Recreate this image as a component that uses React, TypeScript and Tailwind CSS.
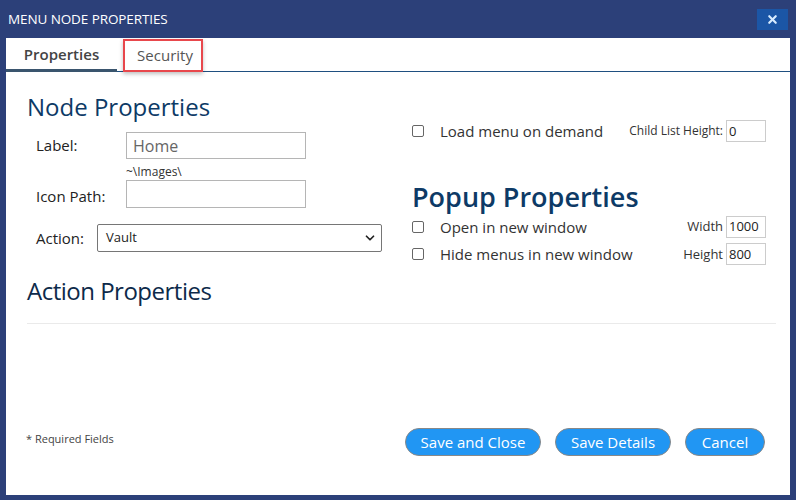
import { ChevronDown, X } from "lucide-react";

const font = { fontFamily: '"Segoe UI", "Open Sans", "Noto Sans", sans-serif' };

function Check() {
  return <span className="block w-[12px] h-[12px] border border-[#666] rounded-[2px] bg-white shrink-0" />;
}

function SmallInput({ value }: { value: string }) {
  return (
    <div className="w-[40px] h-[22px] border border-[#ccc] bg-white px-[2px] flex items-center text-[13px] text-[#222]">
      {value}
    </div>
  );
}

export default function App() {
  return (
    <div className="w-[796px] h-[500px] bg-[#2c4079] flex flex-col" style={font}>
      <div className="h-[38px] flex items-center justify-between pl-[8px] pr-[8px] shrink-0">
        <span className="text-white text-[13.5px] tracking-[-0.1px]">MENU NODE PROPERTIES</span>
        <div className="w-[31px] h-[21px] bg-[#1b56a6] flex items-center justify-center">
          <X size={13} strokeWidth={4} color="#d8ecff" />
        </div>
      </div>

      <div className="mx-[6px] h-[457px] bg-white flex flex-col">
        <div className="h-[34px] flex items-end border-b border-[#1f4f80] shrink-0">
          <div className="w-[111px] h-[34px] flex items-center justify-center border-b-[3px] border-[#3a556e] -mb-px pt-[2px]">
            <span className="text-[15px] font-semibold text-[#444]">Properties</span>
          </div>
          <div className="ml-[6px] w-[80px] h-[33px] border-2 border-[#e8474c] flex items-center justify-center shadow-[0_2px_4px_rgba(0,0,0,0.25)] -mb-px">
            <span className="text-[15px] text-[#555] ml-[4px]">Security</span>
          </div>
        </div>

        <div className="flex pl-[21px] pr-[24px] pt-[20px]">
          <div className="w-[355px] flex flex-col">
            <h1 className="text-[24px] leading-[30px] text-[#0d3a66] font-medium">Node Properties</h1>
            <div className="flex items-center mt-[10px] pl-[9px]">
              <span className="w-[90px] text-[15px] text-[#222]">Label:</span>
              <div className="w-[180px] h-[27px] border border-[#b5b5b5] flex items-center px-[6px] text-[16px] text-[#666]">Home</div>
            </div>
            <div className="pl-[99px] text-[12px] leading-[16px] text-[#333] mt-[5px]">~\Images\</div>
            <div className="flex items-center pl-[9px]">
              <span className="w-[90px] text-[15px] text-[#222] pt-[4px]">Icon Path:</span>
              <div className="w-[180px] h-[28px] border border-[#b5b5b5]" />
            </div>
            <div className="flex items-center mt-[16px] pl-[9px]">
              <span className="w-[61px] text-[15px] text-[#222]">Action:</span>
              <div className="w-[285px] h-[28px] border border-[#767676] rounded-[2px] flex items-center justify-between pl-[8px] pr-[4px]">
                <span className="text-[13px] text-[#222]">Vault</span>
                <ChevronDown size={14} strokeWidth={3} color="#222" />
              </div>
            </div>
          </div>

          <div className="flex-1 flex flex-col pl-[30px] pt-[28px]">
            <div className="flex items-center">
              <Check />
              <span className="ml-[16px] text-[15px] font-medium text-[#333]">Load menu on demand</span>
              <span className="ml-auto mr-[3px] text-[12px] text-[#333]">Child List Height:</span>
              <SmallInput value="0" />
            </div>
            <h2 className="text-[27px] leading-[30px] text-[#0d3a66] font-semibold mt-[39px]">Popup Properties</h2>
            <div className="flex items-center mt-[4px]">
              <Check />
              <span className="ml-[16px] text-[15px] font-medium text-[#333]">Open in new window</span>
              <span className="ml-auto mr-[3px] text-[13px] text-[#333]">Width</span>
              <SmallInput value="1000" />
            </div>
            <div className="flex items-center mt-[5px]">
              <Check />
              <span className="ml-[16px] text-[15px] font-medium text-[#333]">Hide menus in new window</span>
              <span className="ml-auto mr-[3px] text-[13px] text-[#333]">Height</span>
              <SmallInput value="800" />
            </div>
          </div>
        </div>

        <div className="pl-[21px] pr-[14px] mt-[10px]">
          <h2 className="text-[24px] leading-[30px] text-[#0d2a4a] font-medium tracking-[-0.5px]">Action Properties</h2>
          <div className="mt-[17px] border-t border-[#eaeaea]" />
        </div>

        <div className="flex items-center px-[20px] mt-auto mb-[39px]">
          <span className="text-[11px] text-[#444] mb-[6px]">* Required Fields</span>
          <div className="ml-auto flex gap-[14px] pr-[5px]">
            <button className="w-[136px] h-[28px] rounded-full bg-[#2196f3] border border-[#888] text-white text-[15px]">Save and Close</button>
            <button className="w-[116px] h-[28px] rounded-full bg-[#2196f3] border border-[#888] text-white text-[15px]">Save Details</button>
            <button className="w-[80px] h-[28px] rounded-full bg-[#2196f3] border border-[#888] text-white text-[15px]">Cancel</button>
          </div>
        </div>
      </div>
    </div>
  );
}
